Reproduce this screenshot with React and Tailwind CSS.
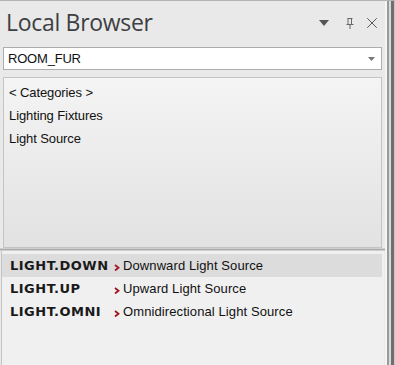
import { X } from 'lucide-react';

const items = ['< Categories >', 'Lighting Fixtures', 'Light Source'];

const objects = [
    { code: 'LIGHT.DOWN', desc: 'Downward Light Source', selected: true },
    { code: 'LIGHT.UP', desc: 'Upward Light Source' },
    { code: 'LIGHT.OMNI', desc: 'Omnidirectional Light Source' },
];

const Chevron = () => (
    <svg width="6" height="7" viewBox="0 0 6 7" className="mt-[3px]">
        <path d="M1 1 L4.5 3.8 L1 6.5" stroke="#a0141e" strokeWidth="1.8" fill="none" />
    </svg>
);

const LocalBrowser = () => {
    return (
        <div className="w-[395px] h-[365px] flex bg-[#e9e9e9] border-t border-[#b4b4b4] overflow-hidden font-['Liberation_Sans',sans-serif]">
            <div className="flex-1 flex flex-col min-w-0">
                <div className="h-[46px] flex items-center pl-[6px] pr-[4px]">
                    <h1 className="flex-1 text-[23px] text-[#3d3f42] font-['Open_Sans',sans-serif] tracking-[-0.3px] -mt-[3px]">Local Browser</h1>
                    <div className="flex items-center text-[#555] -mt-[2px]">
                        <svg width="10" height="6" viewBox="0 0 10 6"><path d="M0 0 H10 L5 6 Z" fill="#555" /></svg>
                        <svg width="8" height="11" viewBox="0 0 8 11" className="ml-[17px]">
                            <path d="M1.5 0.5 H6.5 M2 0.5 V6.5 M5.5 0.5 V6.5 M0.5 6.5 H7.5 M4 6.5 V11" stroke="#666" strokeWidth="1" fill="none" />
                        </svg>
                        <X size={18} strokeWidth={1.3} color="#555" className="ml-[9px]" />
                    </div>
                </div>
                <div className="mx-[3px] h-[23px] bg-white border border-[#adadad] flex items-center pl-[4px] pr-[6px]">
                    <span className="flex-1 text-[13px] text-[#111] tracking-[-0.2px]">ROOM_FUR</span>
                    <svg width="7" height="4" viewBox="0 0 7 4"><path d="M0 0 H7 L3.5 4 Z" fill="#777" /></svg>
                </div>
                <div className="mx-[3px] mt-[7px] h-[171px] border border-[#c4c4c4] bg-gradient-to-b from-[#f4f4f4] to-[#e2e2e2] pt-[3px]">
                    {items.map((it) => (
                        <div key={it} className="h-[23px] pl-[5px] flex items-center text-[13px] text-[#111] tracking-[-0.1px]">{it}</div>
                    ))}
                </div>
                <div className="h-[3px] bg-[#a9a9a9] border-y border-[#cfcfcf]" />
                <div className="flex-1 mx-[1px] border-l border-[#c4c4c4] bg-[#f0f0f0] pt-[3px] pr-[2px]">
                    {objects.map((o) => (
                        <div key={o.code} className={`h-[23px] flex items-center pl-[8px] ${o.selected ? 'bg-[#dcdcdc]' : ''}`}>
                            <span className="w-[104px] text-[13px] font-bold text-[#1a1a1a] tracking-[0.5px] font-['DejaVu_Sans',sans-serif]">{o.code}</span>
                            <Chevron />
                            <span className="ml-[3px] text-[13px] text-[#111] tracking-[0.1px]">{o.desc}</span>
                        </div>
                    ))}
                </div>
            </div>
            <div className="w-[10px] flex">
                <div className="w-[2px] bg-[#f4f4f4]" />
                <div className="w-[2px] bg-[#9a9a9a]" />
                <div className="w-[2px] bg-[#d9d9d9]" />
                <div className="w-[3px] bg-[#6f6f6f]" />
                <div className="w-[1px] bg-[#c8c8c8]" />
            </div>
        </div>
    );
};

export default LocalBrowser;
